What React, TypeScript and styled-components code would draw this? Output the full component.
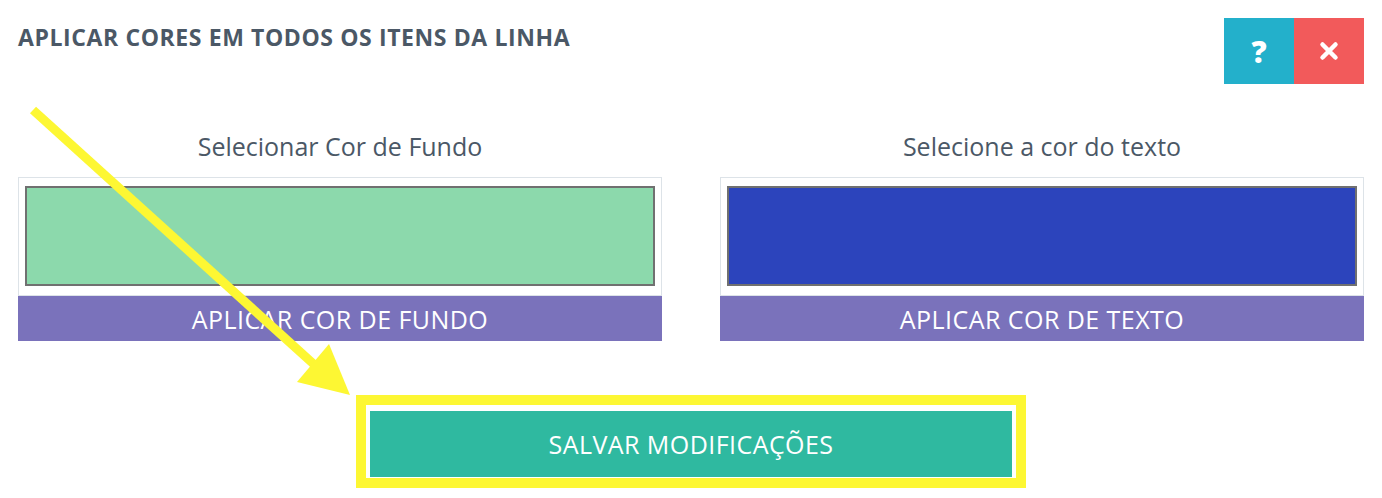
import styled, { createGlobalStyle } from "styled-components";

const GlobalStyle = createGlobalStyle`
  body {
    margin: 0;
    background: #ffffff;
    font-family: "Open Sans", "Noto Sans", sans-serif;
  }
`;

const SPage = styled.div`
  position: relative;
  width: 1382px;
  height: 498px;
  padding: 0 18px;
  box-sizing: border-box;
  overflow: hidden;
`;

const SHeader = styled.div`
  display: flex;
  justify-content: space-between;
  align-items: flex-start;
  padding-top: 18px;
`;

const STitle = styled.h1`
  margin: 4px 0 0;
  font-size: 23px;
  line-height: 30px;
  font-weight: 700;
  color: #4b5866;
  letter-spacing: 0.6px;
`;

const SActions = styled.div`
  display: flex;
`;

const SIconButton = styled.button<{ $bg: string }>`
  width: 70px;
  height: 66px;
  border: none;
  padding: 0;
  display: flex;
  align-items: center;
  justify-content: center;
  background: ${(p) => p.$bg};
  color: #ffffff;
  font-family: "Open Sans", sans-serif;
  font-size: 30px;
  font-weight: 800;
  cursor: pointer;
`;

const SColumns = styled.div`
  display: grid;
  grid-template-columns: 1fr 1fr;
  gap: 58px;
  margin-top: 46px;
`;

const SColumn = styled.div`
  display: flex;
  flex-direction: column;
`;

const SLabel = styled.div`
  text-align: center;
  font-size: 25px;
  color: #4b5866;
  line-height: 32px;
  margin-bottom: 15px;
`;

const SPickerBox = styled.div`
  border: 1px solid #dde3e8;
  padding: 8px 6px 9px;
`;

const SSwatch = styled.div<{ $color: string }>`
  height: 100px;
  box-sizing: border-box;
  border: 2px solid #707070;
  background: ${(p) => p.$color};
`;

const SApplyBar = styled.button`
  height: 45px;
  border: none;
  background: #7a72bb;
  color: #ffffff;
  font-family: "Open Sans", sans-serif;
  font-size: 25px;
  letter-spacing: 0.45px;
  cursor: pointer;
`;

const SFooter = styled.div`
  display: flex;
  justify-content: center;
  margin-top: 54px;
`;

const SHighlight = styled.div`
  border: 10px solid #fdf733;
  padding: 6px 4px 1px;
`;

const SSaveButton = styled.button`
  width: 642px;
  height: 66px;
  border: none;
  display: block;
  background: #2fb9a0;
  color: #ffffff;
  font-family: "Open Sans", sans-serif;
  font-size: 25px;
  letter-spacing: 0.45px;
  cursor: pointer;
`;

const SArrow = styled.svg`
  position: absolute;
  left: 0;
  top: 0;
  pointer-events: none;
`;

const CloseIcon = () => (
  <svg width="20" height="20" viewBox="0 0 20 20">
    <path
      d="M3.5 3.5 L16.5 16.5 M16.5 3.5 L3.5 16.5"
      stroke="#ffffff"
      strokeWidth="4.5"
      strokeLinecap="round"
    />
  </svg>
);

const App = () => {
  return (
    <>
      <GlobalStyle />
      <SPage>
        <SHeader>
          <STitle>APLICAR CORES EM TODOS OS ITENS DA LINHA</STitle>
          <SActions>
            <SIconButton $bg="#23b0cb">?</SIconButton>
            <SIconButton $bg="#f25a5b">
              <CloseIcon />
            </SIconButton>
          </SActions>
        </SHeader>

        <SColumns>
          <SColumn>
            <SLabel>Selecionar Cor de Fundo</SLabel>
            <SPickerBox>
              <SSwatch $color="#8cd9ac" />
            </SPickerBox>
            <SApplyBar>APLICAR COR DE FUNDO</SApplyBar>
          </SColumn>
          <SColumn>
            <SLabel>Selecione a cor do texto</SLabel>
            <SPickerBox>
              <SSwatch $color="#2c44bc" />
            </SPickerBox>
            <SApplyBar>APLICAR COR DE TEXTO</SApplyBar>
          </SColumn>
        </SColumns>

        <SFooter>
          <SHighlight>
            <SSaveButton>SALVAR MODIFICAÇÕES</SSaveButton>
          </SHighlight>
        </SFooter>

        <SArrow width="1382" height="498" viewBox="0 0 1382 498">
          <line
            x1="33"
            y1="110"
            x2="318"
            y2="368"
            stroke="#fdf733"
            strokeWidth="9"
          />
          <polygon points="329,344 297,382 350,395" fill="#fdf733" />
        </SArrow>
      </SPage>
    </>
  );
};

export default App;
